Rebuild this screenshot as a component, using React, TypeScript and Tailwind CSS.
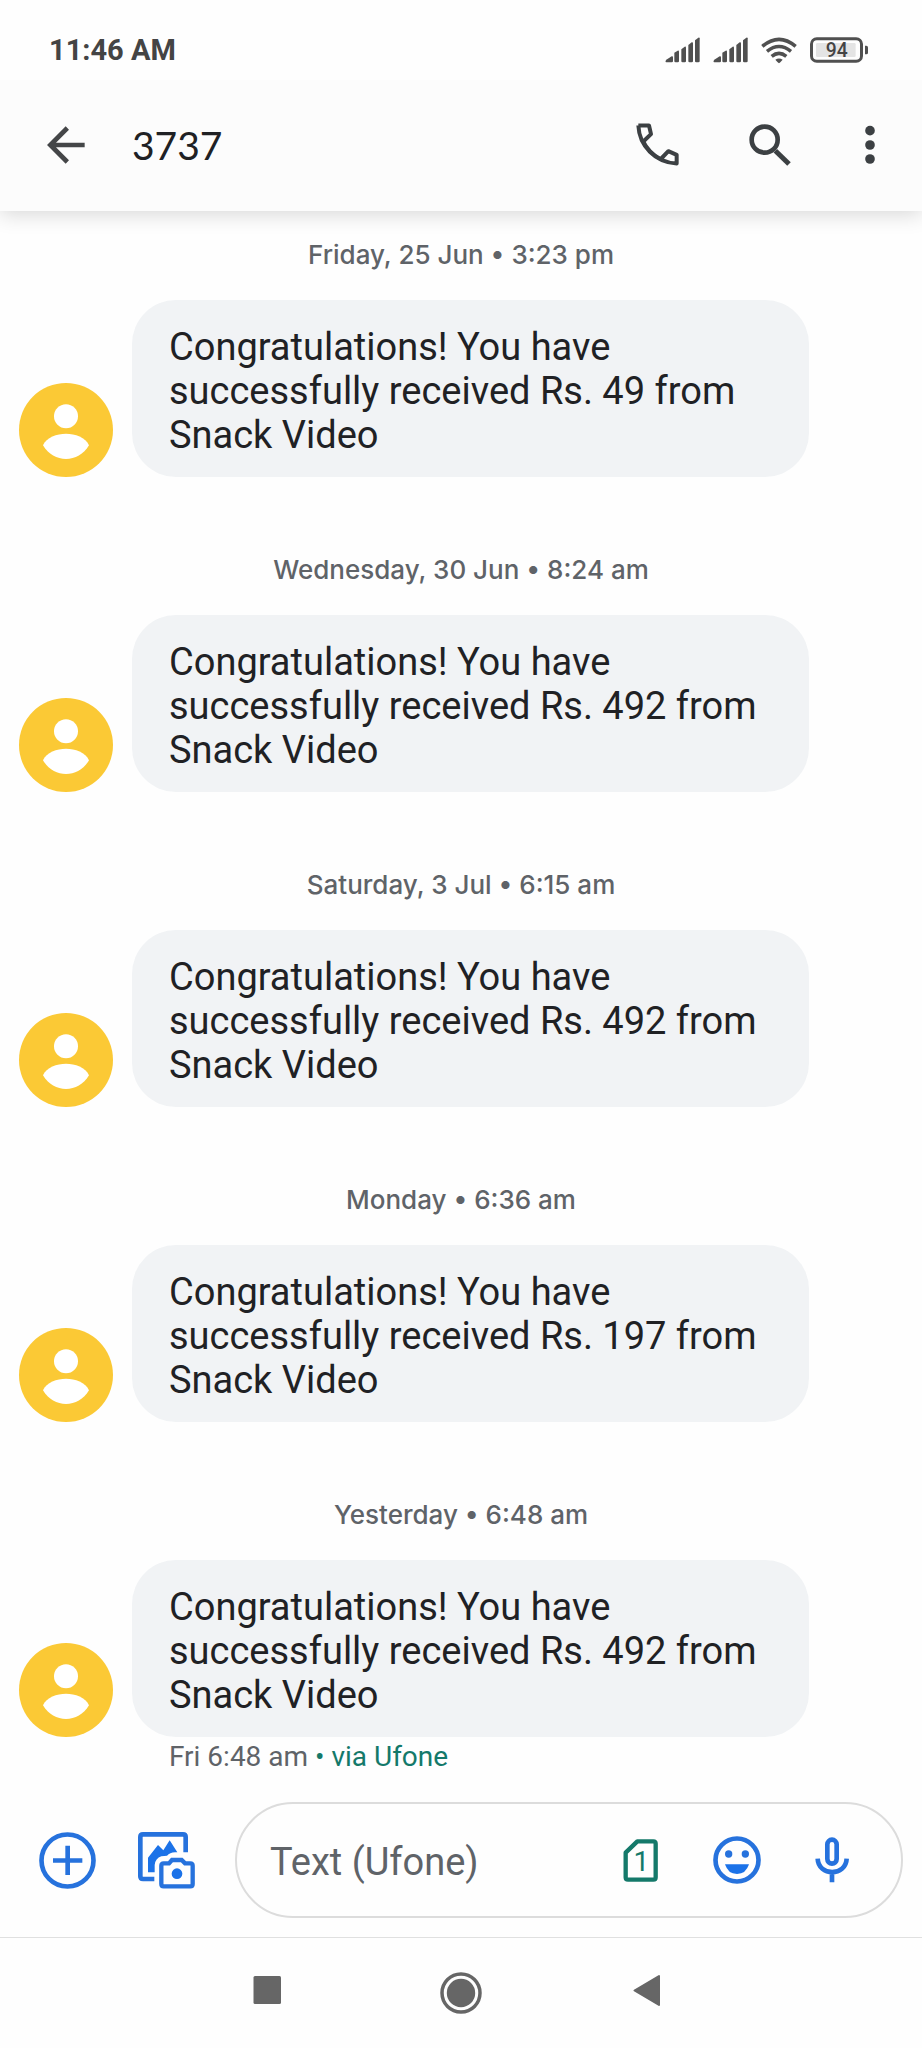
import React from "react";

type Message = { date: string; text: string };

const messages: Message[] = [
  { date: "Friday, 25 Jun • 3:23 pm", text: "Congratulations! You have successfully received Rs. 49 from Snack Video" },
  { date: "Wednesday, 30 Jun • 8:24 am", text: "Congratulations! You have successfully received Rs. 492 from Snack Video" },
  { date: "Saturday, 3 Jul • 6:15 am", text: "Congratulations! You have successfully received Rs. 492 from Snack Video" },
  { date: "Monday • 6:36 am", text: "Congratulations! You have successfully received Rs. 197 from Snack Video" },
  { date: "Yesterday • 6:48 am", text: "Congratulations! You have successfully received Rs. 492 from Snack Video" },
];

function SignalIcon() {
  return (
    <svg className="h-[26px] w-[35px]" viewBox="0 0 105 78" fill="#505050" aria-hidden="true">
      <path d="M4 68 L20 58 Q24 57 24 61 V73 Q24 76 20 76 H4 Q-1 75 4 68Z" />
      <path d="M28 47 L38 41 Q42 40 42 44 V73 Q42 76 38 76 H32 Q28 76 28 73Z" />
      <path d="M49 37 L59 29 Q63 28 63 32 V73 Q63 76 59 76 H53 Q49 76 49 73Z" />
      <path d="M70 24 L80 16 Q84 15 84 19 V73 Q84 76 80 76 H74 Q70 76 70 73Z" />
      <path d="M90 10 L100 2 Q104 1 104 4 V73 Q104 76 100 76 H94 Q90 76 90 73Z" />
    </svg>
  );
}

function WifiIcon() {
  return (
    <svg className="h-[27px] w-[36px]" viewBox="482 106 108 81" fill="none" stroke="#505050" strokeWidth="10.500" strokeLinecap="butt" aria-hidden="true">
      <path d="M486 134 Q536 92 586 134" />
      <path d="M500 149 Q536 120 572 149" />
      <path d="M514 164 Q536 146 558 164" />
      <path d="M525 174 Q536 167 547 174 L540 182 Q536 187 532 182Z" fill="#505050" stroke="none" />
    </svg>
  );
}

function BatteryIcon() {
  return (
    <svg className="h-[26px] w-[59px]" viewBox="630 107 177 78" role="img" aria-label="Battery 94 percent">
      <rect x="634.500" y="112" width="150" height="68" rx="16" fill="none" stroke="#505050" strokeWidth="9" />
      <rect x="648" y="125" width="119" height="42" rx="4" fill="#e4e4e4" />
      <path d="M795 133 h4 q5 0 5 5 v16 q0 5 -5 5 h-4z" fill="#505050" />
      <text x="710" y="168" textAnchor="middle" fontFamily="Roboto, sans-serif" fontWeight="500" fontSize="58" fill="#444444">94</text>
    </svg>
  );
}

function BackIcon() {
  return (
    <svg className="h-[38px] w-[38px]" viewBox="141 378 114 114" fill="none" stroke="#444648" strokeWidth="14" aria-hidden="true">
      <path d="M254 435 H152 M202 384 L151 435 L202 486" />
    </svg>
  );
}

function PhoneIcon() {
  return (
    <svg className="h-[43px] w-[43px]" viewBox="110 371 129 128" fill="none" stroke="#3c4043" strokeWidth="12" strokeLinejoin="round" aria-hidden="true">
      <path d="M117 378 H149 L155 404 L132 426 M117 378 C120 440 168 489 232 492 V466 L207 455 L183 480" />
      <path d="M131 424 C143 449 160 466 184 479" strokeWidth="11" />
    </svg>
  );
}

function SearchIcon() {
  return (
    <svg className="h-[42px] w-[42px]" viewBox="448 370 126 126" fill="none" stroke="#3c4043" aria-hidden="true">
      <circle cx="495" cy="417" r="39" strokeWidth="14" />
      <path d="M527 450 L568 490" strokeWidth="15" />
    </svg>
  );
}

function MoreIcon() {
  return (
    <svg className="h-[40px] w-[10px]" viewBox="795 376 30 120" fill="#3c4043" aria-hidden="true">
      <circle cx="810" cy="393" r="14.500" />
      <circle cx="810" cy="436" r="14.500" />
      <circle cx="810" cy="478" r="14.500" />
    </svg>
  );
}

function Avatar() {
  return (
    <svg className="size-[94px] shrink-0" viewBox="0 0 282 282" role="img" aria-label="Sender">
      <circle cx="141" cy="141" r="141" fill="#fbc935" />
      <circle cx="141" cy="100" r="36" fill="#ffffff" />
      <path d="M72 187 C82 163 114 152 141 152 C168 152 200 163 210 187 C194 214 168 228 141 228 C114 228 88 214 72 187Z" fill="#ffffff" />
    </svg>
  );
}

function AddIcon() {
  return (
    <svg className="size-[57px]" viewBox="0 0 171 171" fill="none" stroke="#2672dd" aria-hidden="true">
      <circle cx="85.500" cy="85.500" r="78" strokeWidth="14" />
      <path d="M42 85.500 H130 M86 41 V129" strokeWidth="14" />
    </svg>
  );
}

function GalleryIcon() {
  return (
    <svg className="size-[57px]" viewBox="414 341 171 171" fill="none" stroke="#2672dd" aria-hidden="true">
      <path d="M463 482 H429 Q421 482 421 474 V356 Q421 348 429 348 H549 Q557 348 557 356 V402" strokeWidth="14" />
      <path d="M444 462 V418 L474 380 L490 396 L509 366 L532 402 C518 400 508 404 501 412 L484 414 Q466 420 464 440 V462Z" fill="#1b72e8" stroke="none" />
      <path d="M491 435 H507 L516 425 H545 L555 435 H571 Q578 435 578 442 V497 Q578 504 571 504 H491 Q484 504 484 497 V442 Q484 435 491 435Z" strokeWidth="13" />
      <circle cx="531" cy="466" r="16" fill="#1b72e8" stroke="none" />
    </svg>
  );
}

function SimIcon() {
  return (
    <svg className="h-[43px] w-[35px]" viewBox="130 176 105 129" aria-hidden="true">
      <path d="M173 183 H221 Q228 183 228 190 V291 Q228 298 221 298 H145 Q138 298 138 291 V217Z" fill="none" stroke="#14796a" strokeWidth="13" strokeLinejoin="round" />
      <text x="185" y="272" textAnchor="middle" fontFamily="Roboto, sans-serif" fontSize="84" fill="#14796a">1</text>
    </svg>
  );
}

function SmileIcon() {
  return (
    <svg className="size-[48px]" viewBox="401 169 144 144" aria-hidden="true">
      <circle cx="473" cy="241" r="64.500" fill="none" stroke="#2672dd" strokeWidth="14" />
      <circle cx="448" cy="223" r="11" fill="#2672dd" />
      <circle cx="498" cy="223" r="11" fill="#2672dd" />
      <path d="M437 254 H509 Q500 283 473 283 Q446 283 437 254Z" fill="#1b72e8" />
    </svg>
  );
}

function MicIcon() {
  return (
    <svg className="h-[46px] w-[34px]" viewBox="706 166 102 138" fill="none" stroke="#2672dd" aria-hidden="true">
      <rect x="743" y="174" width="28" height="72" rx="14" strokeWidth="14" />
      <path d="M714 231 C716 285 799 285 801 231 M757 270 V302" strokeWidth="14" />
    </svg>
  );
}

export default function App() {
  return (
    <div className="flex min-h-screen flex-col bg-[#fefefe] font-['Roboto',sans-serif]">
      <header className="relative bg-[#fcfcfc] shadow-[0_3px_20px_rgba(0,0,0,0.16)]">
        <div className="flex h-20 items-center justify-between bg-[#fefefe] pt-5 pr-[53px] pl-[49px]">
          <span className="text-[29px] leading-8 font-bold text-[#444444]">11:46 AM</span>
          <div className="flex items-center gap-[13px]">
            <SignalIcon />
            <SignalIcon />
            <WifiIcon />
            <BatteryIcon />
          </div>
        </div>
        <div className="flex h-[131px] items-center px-[47px] pb-[2px]">
          <button type="button" aria-label="Back">
            <BackIcon />
          </button>
          <h1 className="ml-[47px] flex-1 font-['Lato',sans-serif] text-[39px] leading-[48px] text-[#202124]">3737</h1>
          <button type="button" aria-label="Call" className="mr-[70px]">
            <PhoneIcon />
          </button>
          <button type="button" aria-label="Search" className="mr-[74px]">
            <SearchIcon />
          </button>
          <button type="button" aria-label="More options">
            <MoreIcon />
          </button>
        </div>
      </header>

      <main className="flex flex-1 flex-col gap-[77px] pt-7">
        {messages.map((m, i) => (
          <section key={m.date} className="flex flex-col gap-[29px]">
            <h2 className="text-center font-['Inter',sans-serif] text-[26px] leading-8 font-medium text-[#5f6368]">{m.date}</h2>
            <div>
              <div className="flex items-end gap-[19px] pl-[19px]">
                <Avatar />
                <p className="w-[86%] max-w-[677px] rounded-[44px] bg-[#f1f3f5] px-[37px] pt-[25px] pb-5 text-[38px] leading-[44px] text-[#202124]">{m.text}</p>
              </div>
              {i === messages.length - 1 && (
                <p className="pt-1 pl-[169px] text-[28px] leading-8 text-[#5f6368]">
                  Fri 6:48 am <span className="text-[#14796a]">• via Ufone</span>
                </p>
              )}
            </div>
          </section>
        ))}
      </main>

      <form className="flex items-center pt-[26px] pr-[19px] pb-[19px] pl-[39px]" onSubmit={(e) => e.preventDefault()}>
        <button type="button" aria-label="Add attachment" className="mr-[42px] shrink-0">
          <AddIcon />
        </button>
        <button type="button" aria-label="Gallery and camera" className="mr-10 shrink-0">
          <GalleryIcon />
        </button>
        <div className="flex h-[116px] min-w-0 flex-1 items-center rounded-full border-2 border-[#dcdcdc] pr-[52px] pl-[33px]">
          <input
            type="text"
            aria-label="Text message"
            placeholder="Text (Ufone)"
            className="min-w-0 flex-1 bg-transparent pt-1 text-[38px] leading-[44px] text-[#202124] outline-none placeholder:text-[#5f6368]"
          />
          <button type="button" aria-label="SIM 1" className="mr-[55px]">
            <SimIcon />
          </button>
          <button type="button" aria-label="Emoji" className="mr-[54px]">
            <SmileIcon />
          </button>
          <button type="button" aria-label="Voice message">
            <MicIcon />
          </button>
        </div>
      </form>

      <nav className="flex h-[111px] items-center justify-center gap-[151px] border-t border-[#e0e0e0]">
        <button type="button" aria-label="Recent apps">
          <svg className="h-[42px] w-9" viewBox="0 0 36 42" fill="#666666" aria-hidden="true">
            <rect x="0.500" y="4" width="27.500" height="28" rx="1.500" />
          </svg>
        </button>
        <button type="button" aria-label="Home">
          <svg className="size-[42px]" viewBox="0 0 42 42" fill="#666666" aria-hidden="true">
            <circle cx="21" cy="21" r="19" fill="none" stroke="#666666" strokeWidth="3.500" />
            <circle cx="21" cy="21" r="14.200" />
          </svg>
        </button>
        <button type="button" aria-label="Back">
          <svg className="h-[42px] w-9" viewBox="0 0 36 42" fill="#666666" stroke="#666666" strokeWidth="2" strokeLinejoin="round" aria-hidden="true">
            <path d="M1.500 18.500 L26 4 V33Z" />
          </svg>
        </button>
      </nav>
    </div>
  );
}
